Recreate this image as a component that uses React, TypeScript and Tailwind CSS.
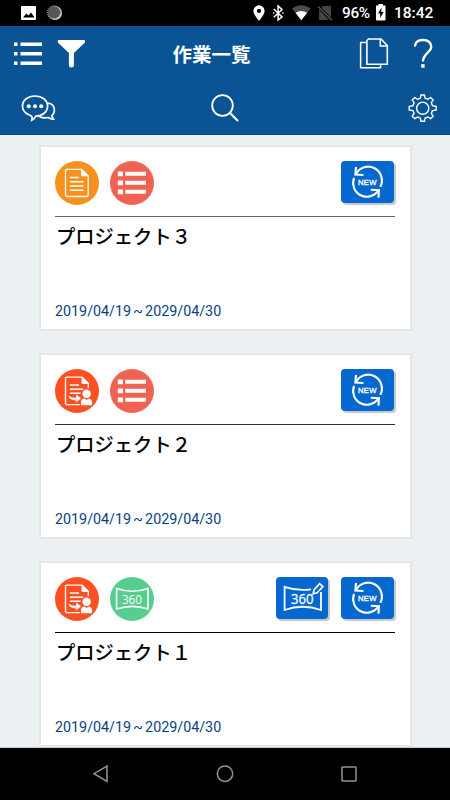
import type { ReactNode } from "react";

const PROJECTS = [
  { title: "プロジェクト３", badges: ["doc", "list"], actions: ["sync"], rule: "bg-[#666666]" },
  { title: "プロジェクト２", badges: ["assign", "list"], actions: ["sync"], rule: "bg-[#333333]" },
  { title: "プロジェクト１", badges: ["assign", "pano"], actions: ["pano", "sync"], rule: "bg-black" },
];

const BADGE_COLORS: Record<string, string> = {
  doc: "bg-[#f7911e]",
  list: "bg-[#f06352]",
  assign: "bg-[#fb5122]",
  pano: "bg-[#57cd8f]",
};

const BADGE_ICONS: Record<string, ReactNode> = {
  doc: (
    <>
      <path d="M12 8.3H26.5L33.2 14.8V34a1.5 1.5 0 0 1-1.5 1.5H12A1.5 1.5 0 0 1 10.5 34V9.8A1.5 1.5 0 0 1 12 8.3Z" strokeWidth="1.3" />
      <path d="M26.5 8.3V14.8H33.2Z" fill="#fff" strokeWidth="1" />
      <path d="M15 16.5H24M15 20.7H28.6M15 25H28.6M15 29.3H28.6" strokeWidth="1.5" />
    </>
  ),
  list: (
    <g fill="#fff" stroke="none">
      <path d="M7.8 10.5h5.2v4.8H7.8zM7.8 19.5h5.2v4.8H7.8zM7.8 28.5h5.2v4.8H7.8z" />
      <path d="M15.3 10.8h20.7v4H15.3zM15.3 19.8h20.7v4H15.3zM15.3 28.8h20.7v4H15.3z" />
    </g>
  ),
  assign: (
    <>
      <path d="M24.8 35.6H12A1.5 1.5 0 0 1 10.5 34V9.6A1.5 1.5 0 0 1 12 8.1H27L33.3 14.4V19" strokeWidth="1.4" />
      <path d="M27 8.1V14.4H33.3Z" fill="#fff" strokeWidth="1" />
      <path d="M15 16H24M15 20.2H28.2M15 24.2H25.5" strokeWidth="1.5" />
      <path d="M13 26.6Q16.5 29.3 21.5 28.7L20.8 25.6L26 29.3L21.3 33.6L21.2 31.4Q15 31.8 13 26.6Z" fill="#fff" stroke="none" />
      <circle cx="31.6" cy="24.8" r="4.2" fill="#fff" stroke="none" />
      <path d="M26 36.3V33.5Q26 29.6 29.7 29.6L31.6 31L33.5 29.6Q37.1 29.6 37.1 33.5V36.3Z" fill="#fff" stroke="none" />
    </>
  ),
  pano: (
    <>
      <path d="M6.6 11.4Q22.3 17 38 11.4V32Q22.3 26.8 6.6 32Z" strokeWidth="1.6" />
      <text x="12" y="26.9" fontSize="13" textLength="19.8" lengthAdjust="spacingAndGlyphs" fill="#fff" stroke="none" className="font-['Open_Sans',sans-serif] font-medium">
        360
      </text>
    </>
  ),
};

const ACTION_ICONS: Record<string, ReactNode> = {
  sync: (
    <>
      <path d="M15 13A13.7 13.7 0 0 1 39.3 25.8" strokeWidth="2.1" />
      <path d="M14.9 6L14.4 13.5L22.5 14" strokeWidth="2.1" />
      <path d="M37.4 29.4A13.7 13.7 0 0 1 13.1 17" strokeWidth="2.1" />
      <path d="M29.8 28.7L38 29.2L37.4 36.6" strokeWidth="2.1" />
      <text x="17" y="24.2" fontSize="7.7" textLength="18.4" fill="#fff" stroke="#fff" strokeWidth=".35" className="font-['Liberation_Sans',sans-serif]">
        NEW
      </text>
    </>
  ),
  pano: (
    <>
      <path d="M35 12.4Q21 14.2 8.6 9.8V33Q26.5 26.5 45 33V15" strokeWidth="1.8" />
      <path d="M37.2 16.9L38 12.9L43.6 6.6L46.9 9.5L41.2 15.8Z" strokeWidth="1.7" />
      <text x="15" y="27.2" fontSize="15" textLength="22.5" lengthAdjust="spacingAndGlyphs" fill="#fff" stroke="#fff" strokeWidth=".3" className="font-['Open_Sans',sans-serif] font-medium">
        360
      </text>
    </>
  ),
};

function StatusBar() {
  return (
    <div className="flex h-[26px] shrink-0 items-center bg-black text-white">
      <svg width="70" height="26" className="mr-auto">
        <rect x="21" y="6" width="15" height="14" rx="1" fill="#fff" />
        <path d="M23 17.5L26.5 13.5L28.4 15.6L31 12.4L34.5 17.5Z" fill="#000" />
        <circle cx="55" cy="13" r="7" fill="#ddd" />
        <circle cx="54" cy="12.4" r="6.2" fill="#555" />
        <circle cx="54" cy="12.4" r="6.6" fill="none" stroke="#777" strokeWidth="1.2" strokeDasharray="1 1" />
      </svg>
      <svg width="85" height="26" fill="none" stroke="#fff" className="mr-1">
        <path d="M6 5.3A5.6 5.6 0 0 0 .4 10.9C.4 14.8 6 20.7 6 20.7S11.6 14.8 11.6 10.9A5.6 5.6 0 0 0 6 5.3ZM6 13A2.1 2.1 0 1 1 6 8.8A2.1 2.1 0 0 1 6 13Z" fill="#fff" stroke="none" />
        <path d="M20.8 9L29 17L25.1 20V6L29 9.5L20.8 17.3" strokeWidth="1.5" />
        <path d="M20 13h1.2M29.3 13h1.2" strokeWidth="1.5" />
        <path d="M39 8.6Q48 2 57.7 8.6L48.3 20.3Z" fill="#4c4c4c" stroke="none" />
        <path d="M42.5 12.7Q48.3 9.5 54.2 12.7L48.3 20.3Z" fill="#fff" stroke="none" />
        <path d="M70 6h8v11.5L68.5 7.5zM66 9.500L76 20H66Z" fill="#444" stroke="none" />
        <path d="M65 6.500L79 20.300" stroke="#555" strokeWidth="1.400" />
      </svg>
      <span className="w-[34px] whitespace-nowrap pt-0.5 font-[Roboto,sans-serif] text-[15.300px] font-medium leading-none tracking-[-0.300px]">96%</span>
      <svg width="10" height="26">
        <path d="M0 5.500h2.500V4h4.500v1.500h2.500V19.500a1 1 0 0 1-1 1H1a1 1 0 0 1-1-1Z" fill="#fff" />
        <path d="M5.500 7.500L2 13.500H4.200V18L7.600 12H5.300Z" fill="#000" />
      </svg>
      <span className="ml-[8px] w-[56px] whitespace-nowrap pt-0.5 font-[Roboto,sans-serif] text-[15.500px] font-medium leading-none">18:42</span>
    </div>
  );
}

function Header() {
  return (
    <header className="h-[109px] shrink-0 border-b border-[#0a4a8c] bg-[#0a5394]">
      <div className="grid h-[55px] grid-cols-[1fr_auto_1fr] items-center">
        <svg width="100" height="55" fill="#fff">
          <path d="M14 16.500h3.500v3.500H14zM14 26h3.500v3.500H14zM14 35.500h3.500v3.500H14z" />
          <path d="M20.500 16.500H42v3.500H20.500zM20.500 26H42v3.500H20.500zM20.500 35.500H42v3.500H20.500z" />
          <path d="M59 14H84a1 1 0 0 1 1 1V16.500L73.900 27V39a2.500 2.500 0 0 1-5 0V27L57.800 16.500V15a1 1 0 0 1 1.200-1Z" />
        </svg>
        <h1 className="pr-[27px] font-['Noto_Sans_CJK_JP',sans-serif] text-[19.500px] font-bold leading-none text-white">作業一覧</h1>
        <svg width="93" height="55" className="justify-self-end" fill="none" stroke="#fff">
          <path d="M9.500 16.500H3.600V41.800H23.600V38.500" strokeWidth="1.500" />
          <path d="M11.500 13H24L30.300 19.500V38.200H9.900V14.500Z" strokeWidth="1.600" />
          <path d="M23.300 13V20H30" strokeWidth="1.500" />
          <path d="M57.900 20.500Q58.300 14 66 14T74.300 20.800C74.300 26.500 66 27 66 35.500" strokeWidth="2.300" />
          <path d="M64.200 38.200h3.400v3.500h-3.400z" fill="#fff" stroke="none" />
        </svg>
      </div>
      <div className="flex h-[53px] items-center justify-between">
        <svg width="70" height="53" fill="none" stroke="#fff" strokeWidth="1.700">
          <path d="M47.800 22C52 22.500 54.400 25.500 54.400 29.200C54.400 31.500 53.500 33.300 51.800 34.700C52 36 53 37.300 53.500 38.100C51.500 38 49.500 37.500 48 36.500C44.500 37.200 40 36.500 38 34" />
          <path d="M34.900 15C28 15 22.500 19.100 22.500 25C22.500 28.700 24.700 31.800 28.400 33.500C32.300 35 32.500 35.500 31.800 39.300C33.800 38.500 35 37 35.700 35.200C42.500 35 47.600 30.900 47.600 25C47.600 19.100 42 15 34.900 15Z" />
          <g fill="#fff" stroke="none">
            <circle cx="28.800" cy="25.200" r="2" />
            <circle cx="35" cy="25.200" r="2" />
            <circle cx="41.200" cy="25.200" r="2" />
          </g>
        </svg>
        <svg width="40" height="53" fill="none" stroke="#fff" strokeWidth="1.800" className="-ml-5">
          <circle cx="22.500" cy="24.500" r="10.300" />
          <path d="M29.800 31.800L38 40" strokeWidth="2.100" />
        </svg>
        <svg width="60" height="53" viewBox="390 81 60 53" fill="none" stroke="#fff" strokeWidth="1.400">
          <path
            d="M420.400 98.100L420.900 95H424.500L425 98.100L428 99.300L430.500 97.500L433.200 100.100L431.300 102.700L432.500 105.700L436.200 106.400V110L432.500 110.600L431.300 113.500L433.200 116.200L430.500 118.700L428 117L425 118.200L424.500 121.300H420.900L420.400 118.200L417.400 117L414.900 118.700L412.200 116.200L414.100 113.500L412.900 110.600L409.200 110V106.400L412.900 105.700L414.100 102.700L412.200 100.100L414.900 97.500L417.400 99.300Z"
            strokeLinejoin="round"
          />
          <circle cx="422.700" cy="108.200" r="6.100" />
        </svg>
      </div>
    </header>
  );
}

function ProjectCard({ title, badges, actions, rule }: (typeof PROJECTS)[number]) {
  return (
    <article className="h-[186px] w-[373px] shrink-0 border-2 border-[#e6e6e6] bg-white px-[14px] pt-[14px]">
      <div className="flex h-[55px] items-start">
        <div className="flex gap-[10.500px]">
          {badges.map((name) => (
            <div key={name} className={`size-[44px] rounded-full ${BADGE_COLORS[name]}`}>
              <svg width="44" height="44" fill="none" stroke="#fff">
                {BADGE_ICONS[name]}
              </svg>
            </div>
          ))}
        </div>
        <div className="ml-auto mr-[2.500px] flex gap-[13px]">
          {actions.map((name) => (
            <button key={name} className="h-[42px] w-[52.500px] rounded-[4px] bg-[#0568d1] shadow-[2px_2px_0_#c8c8c8]">
              <svg width="52" height="42" fill="none" stroke="#fff">
                {ACTION_ICONS[name]}
              </svg>
            </button>
          ))}
        </div>
      </div>
      <div className={`mr-px h-px ${rule}`} />
      <h2 className="mt-[7px] pl-px font-['Noto_Sans_CJK_JP',sans-serif] text-[19.300px] font-medium leading-[24px] text-black">{title}</h2>
      <p className="mt-[53px] font-[Roboto,sans-serif] text-[14.300px] leading-[20px] text-[#0b3f82] [word-spacing:-1.400px]">2019/04/19 ~ 2029/04/30</p>
    </article>
  );
}

function NavigationBar() {
  return (
    <nav className="flex h-[52px] shrink-0 items-center justify-between bg-black px-[92px]">
      <svg width="17" height="52" fill="none" stroke="#929292" strokeWidth="1.500">
        <path d="M15 18V33.500L2 25.700Z" />
      </svg>
      <svg width="18" height="52" fill="none" stroke="#929292" strokeWidth="1.500">
        <circle cx="9" cy="25.700" r="7.700" />
      </svg>
      <svg width="17" height="52" fill="none" stroke="#929292" strokeWidth="1.500">
        <rect x="1" y="19" width="14" height="14" rx=".5" />
      </svg>
    </nav>
  );
}

export default function App() {
  return (
    <div className="flex h-[800px] w-[450px] flex-col overflow-hidden">
      <StatusBar />
      <Header />
      <main className="flex h-[613px] shrink-0 flex-col gap-[22px] overflow-hidden border-b border-[#c5cccc] bg-[#ebf1f2] pl-[39px] pt-[10px]">
        {PROJECTS.map((project) => (
          <ProjectCard key={project.title} {...project} />
        ))}
      </main>
      <NavigationBar />
    </div>
  );
}
